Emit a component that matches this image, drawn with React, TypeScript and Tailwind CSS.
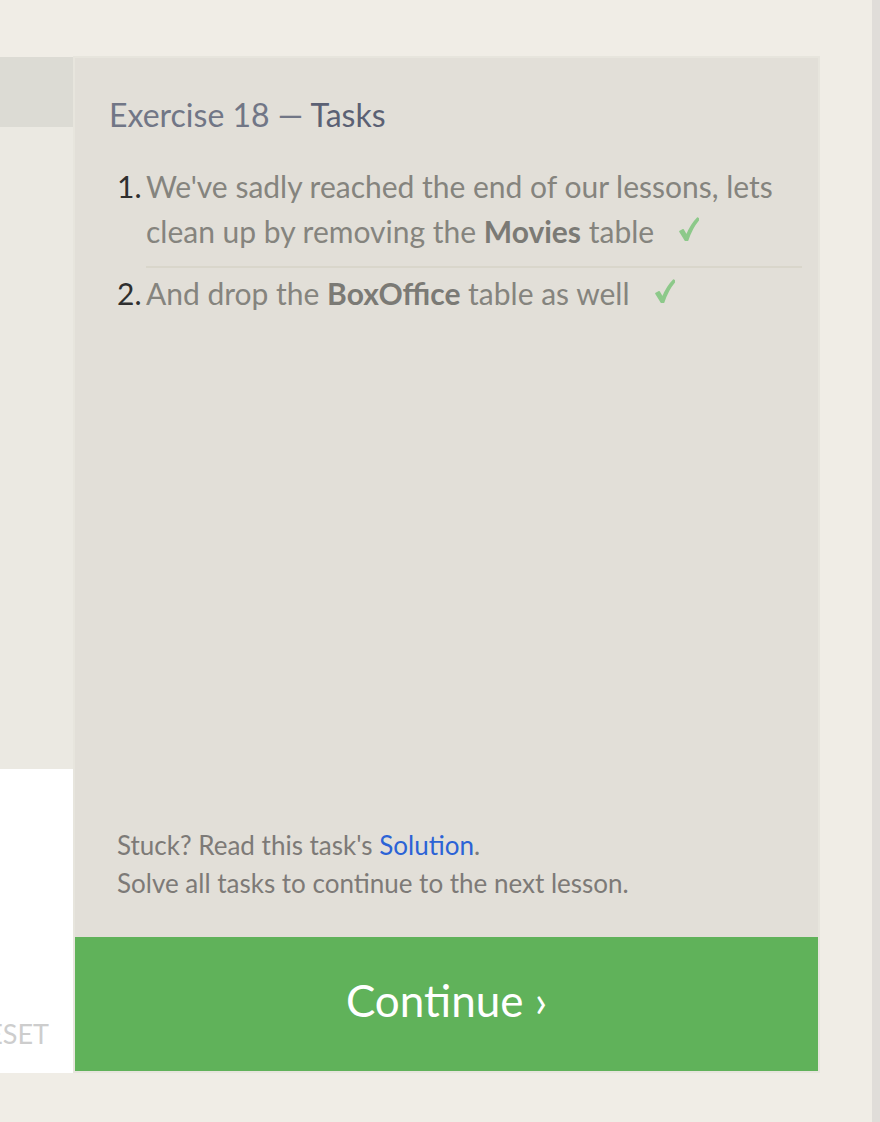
const tasks = [
  {
    before: "We've sadly reached the end of our lessons, lets clean up by removing the ",
    bold: "Movies",
    after: " table",
  },
  { before: "And drop the ", bold: "BoxOffice", after: " table as well" },
];

function Check() {
  return (
    <svg
      viewBox="0 0 20 24"
      className="ml-[25px] inline-block h-[24px] w-[20px] -translate-y-[2px] align-baseline"
      aria-hidden
    >
      <path
        d="M1 14.5 L4.2 12.8 L7.6 18.6 C10.4 11.4 14.2 5.4 18.6 1 L20 2.2 C15.4 7.4 11.6 14.2 8.6 23.2 L6.4 23.4 Z"
        fill="#8dc98a"
        stroke="#8dc98a"
        strokeWidth="1.6"
        strokeLinejoin="round"
      />
    </svg>
  );
}

function TaskList() {
  return (
    <ol className="mt-[27px] pr-4">
      {tasks.map((task, i) => (
        <li key={i} className="flex">
          <span className="w-[37px] flex-shrink-0 pl-[8px] text-[#2f2f2f]">{i + 1}.</span>
          <div
            className={
              i < tasks.length - 1
                ? "mb-[3px] flex-1 border-b-2 border-[#d9d6cb] pb-[12px]"
                : "flex-1"
            }
          >
            {task.before}
            <b className="font-bold text-[#7b7a75]">{task.bold}</b>
            {task.after}
            <Check />
          </div>
        </li>
      ))}
    </ol>
  );
}

export default function App() {
  return (
    <div className="flex h-[1122px] w-[880px] bg-[#f0ede6] font-['Lato',sans-serif]">
      <div className="mt-[57px] flex h-[1016px] w-[73px] flex-col">
        <div className="h-[70px] bg-[#dcdbd4]" />
        <div className="h-[642px] bg-[#ebe9e2]" />
        <div className="flex flex-1 items-end justify-end overflow-hidden bg-white pr-[24px] pb-[26px]">
          <span className="text-[27px] leading-none text-[#cdcdcd]">RESET</span>
        </div>
      </div>

      <div className="mt-[56px] flex h-[1017px] w-[747px] flex-col border-2 border-[#e7e5dd] bg-[#e2dfd8]">
        <div className="flex flex-1 flex-col pl-[34px] text-[30px] leading-[45px] text-[#85847e]">
          <h2 className="mt-[34px] text-[32px] leading-[45px]">
            <span className="text-[#717686]">Exercise 18 — </span>
            <span className="text-[#5b6174]">Tasks</span>
          </h2>
          <TaskList />
          <div className="flex-1" />
          <div className="mb-[35px] pl-[8px] text-[26px] leading-[38px] text-[#7d7a77]">
            <p>
              Stuck? Read this task's <span className="text-[#2b63d6]">Solution</span>.
            </p>
            <p>Solve all tasks to continue to the next lesson.</p>
          </div>
        </div>
        <button className="flex h-[134px] items-center justify-center bg-[#60b25a] pb-[8px] text-[44px] text-white">
          Continue ›
        </button>
      </div>

      <div className="flex-1" />
      <div className="h-full w-[8px] bg-[#e0ddd9]" />
    </div>
  );
}
